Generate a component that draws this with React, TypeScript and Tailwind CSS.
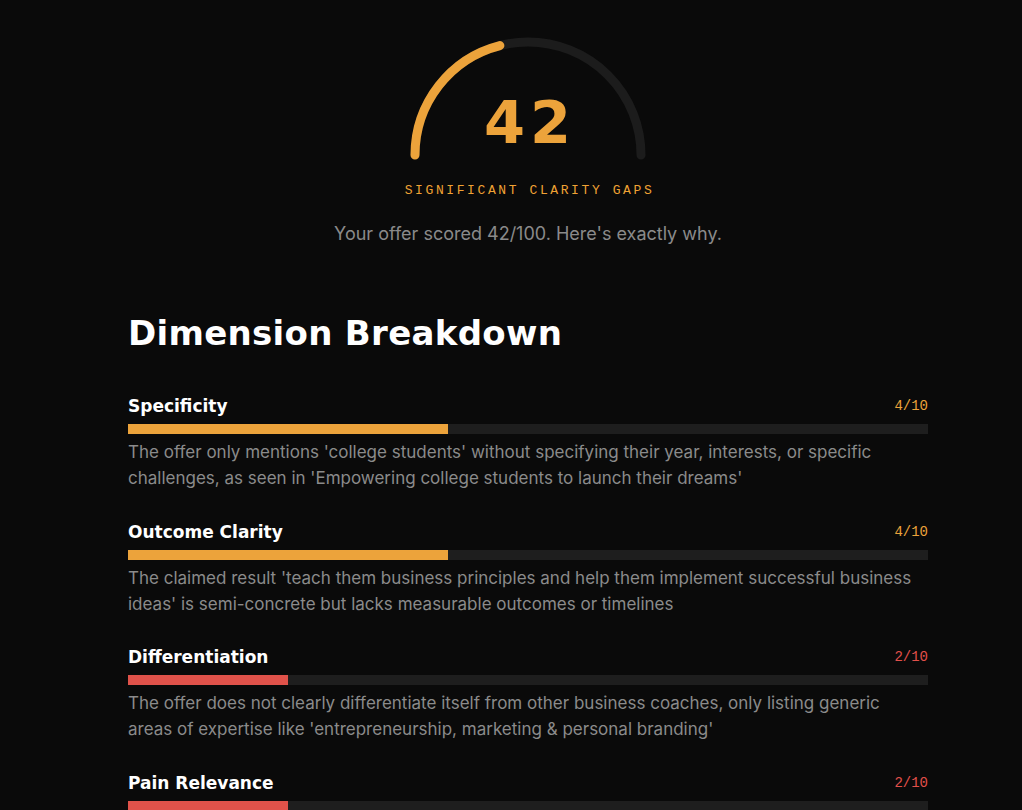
import React from "react";

const rows = [
  {
    title: "Specificity",
    score: 4,
    color: "orange",
    text: "The offer only mentions 'college students' without specifying their year, interests, or specific challenges, as seen in 'Empowering college students to launch their dreams'",
  },
  {
    title: "Outcome Clarity",
    score: 4,
    color: "orange",
    text: "The claimed result 'teach them business principles and help them implement successful business ideas' is semi-concrete but lacks measurable outcomes or timelines",
  },
  {
    title: "Differentiation",
    score: 2,
    color: "red",
    text: "The offer does not clearly differentiate itself from other business coaches, only listing generic areas of expertise like 'entrepreneurship, marketing & personal branding'",
  },
  {
    title: "Pain Relevance",
    score: 2,
    color: "red",
    text: "The offer does not name a specific pain point or frustration that college students experience when trying to start a business",
  },
];

function Gauge({ score }: { score: number }) {
  const cx = 120;
  const cy = 120;
  const r = 113;
  const angle = Math.PI - (score / 100) * Math.PI;
  const ex = cx + r * Math.cos(angle);
  const ey = cy - r * Math.sin(angle);
  return (
    <div className="relative mx-auto h-[130px] w-[240px]">
      <svg width="240" height="130" viewBox="0 0 240 130" className="block">
        <path
          d={`M ${cx - r} ${cy} A ${r} ${r} 0 0 1 ${cx + r} ${cy}`}
          fill="none"
          stroke="#1c1c1c"
          strokeWidth="9"
          strokeLinecap="round"
        />
        <path
          d={`M ${cx - r} ${cy} A ${r} ${r} 0 0 1 ${ex} ${ey}`}
          fill="none"
          stroke="#eca33b"
          strokeWidth="9"
          strokeLinecap="round"
        />
      </svg>
      <div className="absolute left-0 right-0 top-[53px] pl-[4px] text-center text-[59px] font-bold leading-[70px] tracking-[5px] text-[#eca33b] [font-family:'DejaVu_Sans',sans-serif]">
        42
      </div>
    </div>
  );
}

export default function App() {
  return (
    <div className="min-h-screen w-full overflow-hidden bg-[#0a0a0a]">
      <div className="ml-[128px] w-[800px] pt-[35px]">
        <Gauge score={42} />
        <div className="mt-[18px] pl-[3px] text-center text-[13px] leading-[16px] tracking-[2.6px] text-[#f0a234] [font-family:'Liberation_Mono',monospace]">
          SIGNIFICANT CLARITY GAPS
        </div>
        <div className="mt-[23px] text-center text-[18px] leading-[24px] text-[#8a8a8a] [font-family:Inter,sans-serif]">
          Your offer scored 42/100. Here's exactly why.
        </div>
        <h2 className="mt-[65px] text-[34px] font-bold leading-[44px] tracking-[0.3px] text-white [font-family:'DejaVu_Sans',sans-serif]">
          Dimension Breakdown
        </h2>
        <div className="mt-[39px] flex flex-col gap-[28.5px]">
          {rows.map((row) => (
            <div key={row.title} className="flex flex-col">
              <div className="flex items-center justify-between">
                <span className="text-[17px] font-bold leading-[24px] text-white [font-family:'DejaVu_Sans',sans-serif]">
                  {row.title}
                </span>
                <span
                  className={`text-[14px] leading-[20px] [font-family:'Liberation_Mono',monospace] ${
                    row.color === "orange" ? "text-[#eca33b]" : "text-[#e2504a]"
                  }`}
                >
                  {row.score}/10
                </span>
              </div>
              <div className="mt-[6px] h-[10px] w-full bg-[#1e1e1e]">
                <div
                  className={`h-full ${row.color === "orange" ? "bg-[#eca33b]" : "bg-[#e0524a]"}`}
                  style={{ width: `${row.score * 10}%` }}
                />
              </div>
              <p className="mt-[5px] text-[17px] leading-[26px] text-[#8b8b8b] [font-family:Inter,sans-serif]">
                {row.text}
              </p>
            </div>
          ))}
        </div>
      </div>
    </div>
  );
}
